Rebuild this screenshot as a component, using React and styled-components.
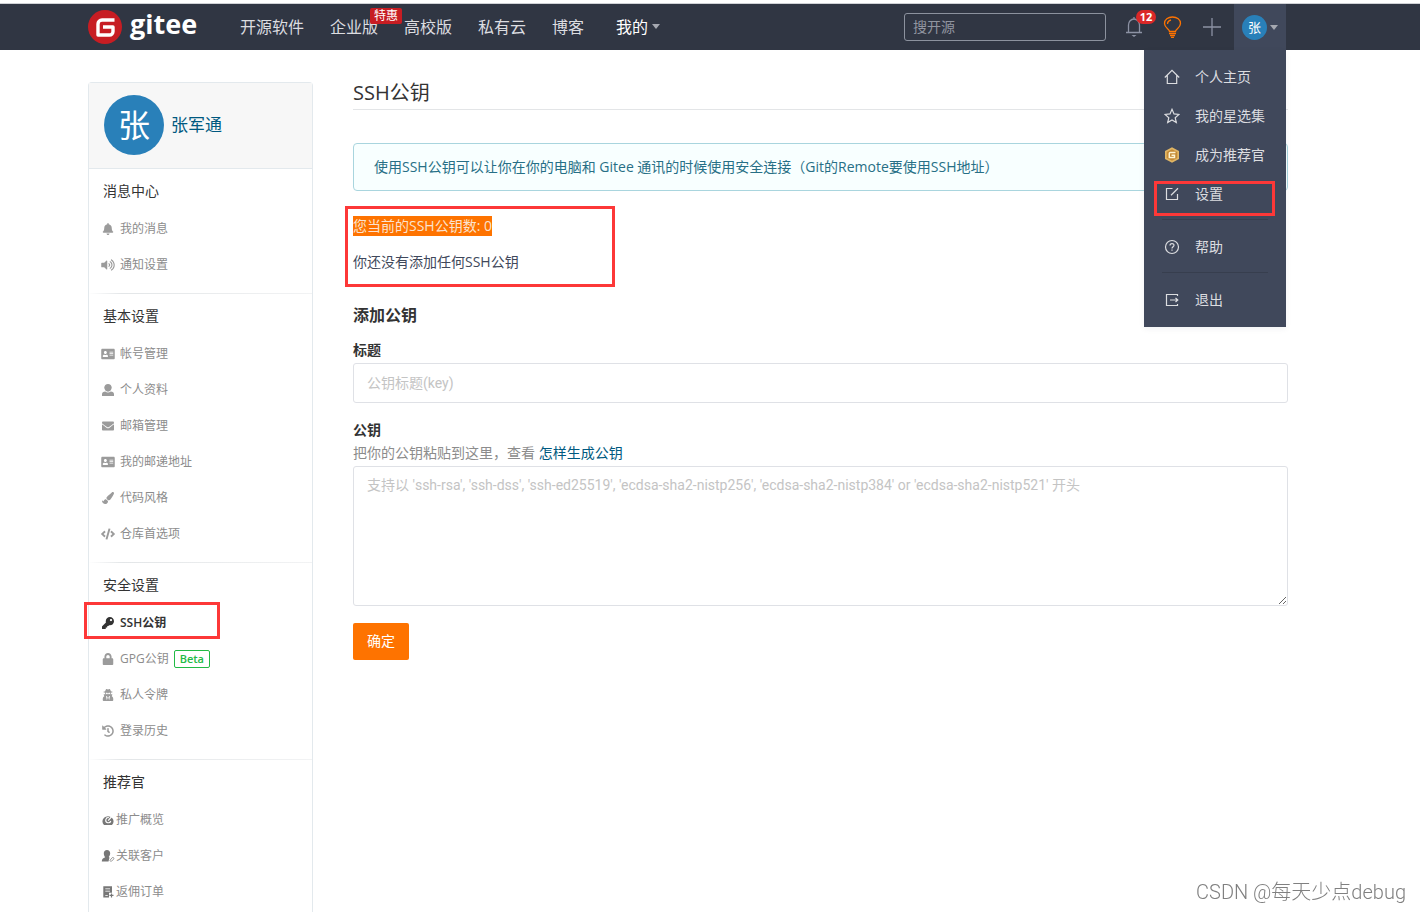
import { useState } from 'react';
import styled, { createGlobalStyle, css } from 'styled-components';
import {
  FaAddressCard,
  FaBell,
  FaCode,
  FaEnvelope,
  FaHistory,
  FaKey,
  FaLock,
  FaPaintBrush,
  FaUserSecret,
  FaVolumeUp,
} from 'react-icons/fa';

const colors = {
  header: '#303643',
  menu: '#40485b',
  orange: '#fe7300',
  red: '#c71d23',
  mark: '#fd3838',
  blue: '#2980b9',
  link: '#005980',
  text: '#333333',
  body: '#40485b',
  muted: '#8c8c8c',
  border: '#e3e9ed',
};

const GlobalStyle = createGlobalStyle`
  *, *::before, *::after {
    box-sizing: border-box;
  }
  body {
    margin: 0;
    background: #fff;
    color: ${colors.body};
    font-family: 'Open Sans', 'Noto Sans CJK SC', sans-serif;
    font-size: 14px;
    line-height: 20px;
  }
  a {
    color: inherit;
    text-decoration: none;
  }
  button, input, textarea {
    font: inherit;
  }
`;

const Page = styled.div`
  min-height: 100vh;
  display: flex;
  flex-direction: column;
`;

/* header */
const Header = styled.header`
  height: 50px;
  padding: 0 134px 0 88px;
  display: flex;
  align-items: stretch;
  background: ${colors.header};
  border-top: 3px solid #fff;
  box-shadow: inset 0 1px 0 #d0d2d6;
`;

const Logo = styled.a`
  width: 126px;
  display: flex;
  align-items: center;
  gap: 8px;
  color: #fff;
  font-size: 27px;
  font-weight: 700;
  line-height: 40px;
  & span {
    padding-bottom: 6px;
  }
`;

const Nav = styled.nav`
  display: flex;
  align-items: center;
  gap: 26px;
  padding-left: 26px;
  color: #dcdde0;
  font-size: 16px;
  white-space: nowrap;
`;

const NavLink = styled.a`
  position: relative;
`;

const NavTag = styled.span`
  position: absolute;
  left: 40px;
  top: -9px;
  padding: 0 4px;
  border-radius: 2px;
  background: ${colors.red};
  color: #fff;
  font-size: 12px;
  line-height: 16px;
`;

const NavButton = styled.button`
  display: flex;
  align-items: center;
  gap: 4px;
  margin-left: 6px;
  padding: 0;
  border: 0;
  background: none;
  color: #fff;
`;

const Caret = styled.i`
  border: 4px solid transparent;
  border-top: 5px solid #a5a8b0;
  border-bottom: 0;
`;

const Tools = styled.div`
  margin-left: auto;
  display: flex;
  align-items: center;
`;

const Search = styled.input`
  width: 202px;
  height: 28px;
  margin-right: 10px;
  padding: 0 8px;
  border: 1px solid #8c929e;
  border-radius: 3px;
  background: transparent;
  color: #fff;
  &::placeholder {
    color: #9095a0;
    opacity: 1;
  }
`;

const ToolButton = styled.button`
  position: relative;
  width: 39px;
  padding: 0 4px 0 0;
  display: flex;
  justify-content: center;
  border: 0;
  background: none;
  color: ${p => (p.$active ? colors.orange : '#8c92a4')};
`;

const Count = styled.span`
  position: absolute;
  left: 20px;
  top: -6px;
  width: 20px;
  border-radius: 7px;
  background: #db2828;
  color: #fff;
  font-size: 11px;
  font-weight: 700;
  line-height: 14px;
`;

const Account = styled.div`
  position: relative;
  align-self: stretch;
  margin-top: 1px;
  margin-left: 1px;
`;

const AccountButton = styled.button`
  width: 52px;
  height: 100%;
  padding: 0;
  display: flex;
  align-items: center;
  justify-content: center;
  gap: 3px;
  border: 0;
  background: ${colors.menu};
`;

const Avatar = styled.span`
  width: ${p => p.$size}px;
  height: ${p => p.$size}px;
  display: flex;
  align-items: center;
  justify-content: center;
  border-radius: 50%;
  background: ${colors.blue};
  color: #fff;
  font-size: ${p => (p.$size > 30 ? 32 : 13)}px;
`;

const Menu = styled.ul`
  position: absolute;
  top: 100%;
  right: 0;
  z-index: 2;
  width: 142px;
  margin: 0;
  padding: 7px 0 8px;
  list-style: none;
  background: ${colors.menu};
  color: #dcdde0;
  box-shadow: 0 2px 6px rgba(0, 40, 60, 0.06);
`;

const MenuLink = styled.a`
  height: 39px;
  padding: 0 20px;
  display: flex;
  align-items: center;
  gap: 15px;
  white-space: nowrap;
  & svg {
    flex: none;
  }
`;

const MenuRule = styled.li`
  height: 1px;
  margin: 6px 18px 7px;
  background: #373e4e;
`;

const marked = css`
  position: relative;
  &::after {
    content: '';
    position: absolute;
    border: 3px solid ${colors.mark};
    pointer-events: none;
  }
`;

const MarkedMenuItem = styled.li`
  ${marked}
  &::after {
    inset: 7px 11px -3px 10px;
  }
`;

/* layout */
const Container = styled.div`
  flex: 1;
  padding: 32px 132px 0 88px;
  display: flex;
  gap: 40px;
`;

const Sidebar = styled.aside`
  width: 225px;
  flex: none;
  border: 1px solid ${colors.border};
  border-bottom: 0;
  border-radius: 4px 4px 0 0;
`;

const Profile = styled.div`
  height: 86px;
  padding: 0 15px 2px;
  display: flex;
  align-items: center;
  gap: 7px;
  border-bottom: 1px solid ${colors.border};
  background: #f7f7f7;
  color: ${colors.link};
  font-size: 17px;
`;

const Section = styled.section`
  padding-bottom: 10px;
  & + & {
    border-top: 1px solid;
    border-image: linear-gradient(to right, #fff, #e3e6e8 15%, #f2f3f4) 1;
  }
`;

const SectionTitle = styled.h2`
  margin: 0;
  padding: 12px 14px 10px;
  color: ${colors.text};
  font-size: 14px;
  font-weight: 400;
  line-height: 20px;
`;

const List = styled.ul`
  margin: 0;
  padding: 0;
  list-style: none;
`;

const SideItem = styled.li`
  ${p => p.$marked && marked}
  &::after {
    inset: -3px 92px 2px -5px;
  }
`;

const SideLink = styled.a`
  height: 36px;
  padding-left: 12px;
  display: flex;
  align-items: center;
  gap: ${p => (p.$tight ? 1 : 5)}px;
  color: ${p => (p.$active ? colors.text : colors.muted)};
  font-size: 12px;
  font-weight: ${p => (p.$active ? 600 : 400)};
  & svg {
    width: 14px;
    flex: none;
    color: ${p => (p.$active ? colors.text : p.$tight ? '#777' : '#9b9b9b')};
  }
`;

const Beta = styled.span`
  padding: 0 5px;
  border: 1px solid #21ba45;
  border-radius: 2px;
  color: #21ba45;
  font-size: 11px;
  font-weight: 600;
  line-height: 16px;
`;

const Main = styled.main`
  flex: 1;
  min-width: 0;
`;

const Title = styled.h1`
  margin: 0 0 33px;
  padding-bottom: 5px;
  border-bottom: 1px solid #e3e5e7;
  color: ${colors.text};
  font-size: 20px;
  font-weight: 400;
  line-height: 22px;
`;

const Notice = styled.p`
  margin: 0 0 15px;
  padding: 13px 20px;
  border: 1px solid #a9d5de;
  border-radius: 4px;
  background: #f8ffff;
  color: #276f86;
`;

const KeyStatus = styled.div`
  ${marked}
  padding-top: 10px;
  &::after {
    inset: 0 auto -15px -8px;
    width: 270px;
  }
  & p {
    margin: 0 0 16px;
  }
  & p + p {
    margin: 0;
  }
`;

const Selected = styled.span`
  display: inline-block;
  background: ${colors.orange};
  color: #fbe3cf;
`;

const FormTitle = styled.h2`
  margin: 33px 0 15px;
  color: ${colors.text};
  font-size: 16px;
  font-weight: 600;
  line-height: 20px;
`;

const Label = styled.label`
  display: block;
  color: ${colors.text};
  font-weight: 600;
`;

const Hint = styled.p`
  margin: 3px 0;
  color: #8c8c8c;
  & a {
    color: ${colors.link};
  }
`;

const fieldStyle = css`
  display: block;
  width: 100%;
  border: 1px solid #dfe1e6;
  border-radius: 3px;
  background: #fff;
  color: ${colors.text};
  font-family: Roboto, 'Noto Sans CJK SC', sans-serif;
  &::placeholder {
    color: #c4c4c4;
    opacity: 1;
  }
`;

const TextInput = styled.input`
  ${fieldStyle}
  height: 40px;
  margin: 3px 0 17px;
  padding: 0 13px;
`;

const TextArea = styled.textarea`
  ${fieldStyle}
  height: 140px;
  margin-bottom: 17px;
  padding: 8px 13px;
`;

const Submit = styled.button`
  padding: 8px 14px 9px;
  border: 0;
  border-radius: 2px;
  background: ${colors.orange};
  color: #fff;
`;

const Watermark = styled.div`
  position: fixed;
  right: 14px;
  bottom: 8px;
  color: #808080;
  font-family: Roboto, 'Noto Sans CJK SC', sans-serif;
  font-size: 20px;
  font-weight: 300;
  line-height: 24px;
`;

/* icons */
const Line = ({ size = 16, width = 1.2, children }) => (
  <svg
    width={size}
    height={size}
    viewBox="0 0 16 16"
    fill="none"
    stroke="currentColor"
    strokeWidth={width}
    aria-hidden="true"
  >
    {children}
  </svg>
);

const LogoMark = () => (
  <svg width="34" height="34" viewBox="0 0 34 34" aria-hidden="true">
    <circle cx="17" cy="17" r="17" fill={colors.red} />
    <path
      d="M26.500 10H14a4 4 0 0 0-4 4v11h11.500a3.500 3.500 0 0 0 3.500-3.500V17H15"
      fill="none"
      stroke="#fff"
      strokeWidth="3.400"
      strokeLinejoin="round"
    />
  </svg>
);

const BellIcon = () => (
  <svg width="18" height="22" viewBox="0 0 18 22" fill="none" stroke="currentColor" aria-hidden="true">
    <path d="M1 16.500h16M3.500 16V9a5.500 6 0 0 1 11 0v7M9 1v2" strokeWidth="1.300" />
    <path d="M6.500 19h5L9 21z" fill="currentColor" stroke="none" />
  </svg>
);

const BulbIcon = () => (
  <svg width="19" height="22" viewBox="0 0 19 22" fill="none" stroke="currentColor" aria-hidden="true">
    <path
      d="M6.500 15.500C6.500 13 1.500 12 1.500 7.500 1.500 3.500 5 1 9.500 1s8 2.500 8 6.500c0 4.500-5 5.500-5 8z"
      strokeWidth="1.300"
    />
    <path d="M4.500 8c0-2 1.500-3.500 3.500-4M6 17.500h7M7 19.500h5M8 21.300h3" strokeWidth="1.300" />
  </svg>
);

const PlusIcon = () => (
  <svg width="18" height="18" viewBox="0 0 18 18" stroke="currentColor" aria-hidden="true">
    <path d="M9 0v18M0 9h18" strokeWidth="1.300" />
  </svg>
);

const HomeIcon = () => (
  <Line>
    <path d="M.8 8.500 8 1.300l7.200 7.200M3.300 6.500v8h9.400v-8" />
  </Line>
);

const StarIcon = () => (
  <Line>
    <path d="m8 1.300 2 4.600 5 .5-3.800 3.300 1.100 4.900L8 12l-4.300 2.600 1.100-4.900L1 6.400l5-.5z" />
  </Line>
);

const MedalIcon = () => (
  <svg width="16" height="16" viewBox="0 0 16 16" aria-hidden="true">
    <path d="M8 .3 15 4v8l-7 3.700L1 12V4z" fill="#e0b565" />
    <path d="M8 2.300 13.300 5v6L8 13.700 2.700 11V5z" fill="#c58a35" />
    <path
      d="M11.500 5.500H6.300c-.6 0-1 .4-1 1v4h5.200V8.300h-3"
      fill="none"
      stroke="#fff3d0"
      strokeWidth="1.500"
    />
  </svg>
);

const EditIcon = () => (
  <Line>
    <path d="M8.500 2.500h-6v11h11V8M7 9.200 14 2.300" />
  </Line>
);

const HelpIcon = () => (
  <Line>
    <circle cx="8" cy="8" r="6.500" />
    <path d="M6 6.600c0-2.700 4-2.600 4-.3C10 7.700 8 7.800 8 9.500M8 10.500v1.300" />
  </Line>
);

const ExitIcon = () => (
  <Line>
    <path d="M13.500 4V2.500h-11v11h11V12M6 8h8M11.500 6l2.300 2-2.300 2" />
  </Line>
);

const UserIcon = () => (
  <svg width="14" height="12" viewBox="0 0 14 12" fill="currentColor" aria-hidden="true">
    <path d="M7 0c2.200 0 3.700 1.500 3.700 3.600C10.700 5.800 9 7.800 7 7.800S3.300 5.800 3.300 3.600C3.300 1.500 4.800 0 7 0z" />
    <path d="M1 12v-1.800C1 8.600 2.300 8 4.300 7.600c1.600 1.300 3.800 1.300 5.400 0 2 .4 3.300 1 3.300 2.600V12z" />
  </svg>
);

const GaugeIcon = () => (
  <svg width="14" height="12" viewBox="0 0 14 12" fill="none" aria-hidden="true">
    <path d="M3 11a5.600 5.200 0 1 1 8 0z" fill="currentColor" />
    <path d="M7.800 3.600a2.600 2.600 0 1 0 2 3.400" stroke="#fff" strokeWidth="1.100" />
    <path d="m7.200 6.600 4-4.600" stroke="#fff" strokeWidth="1.200" />
  </svg>
);

const ClientIcon = () => (
  <svg width="14" height="12" viewBox="0 0 14 12" fill="currentColor" aria-hidden="true">
    <path d="M6 0c2 0 3.200 1.300 3.200 3.200 0 1.600-.7 2.800-1.400 3.600l.7 1L7.500 11.500H.8C.8 9 2 8.200 4.200 7.200 3.400 6.200 2.800 4.800 2.800 3.200 2.800 1.300 4 0 6 0z" />
    <path
      d="m9.200 10 2-2.300c.8-.8 2.300.3 1.500 1.300l-1.900 2c-.9.900-2.300-.1-1.600-1z"
      fill="none"
      stroke="currentColor"
      strokeWidth=".7"
    />
  </svg>
);

const OrderIcon = () => (
  <svg width="14" height="12" viewBox="0 0 14 12" aria-hidden="true">
    <path d="M2.300.3H11v6.500H8v4.700H2.300z" fill="currentColor" />
    <path d="M4.300 2.800H9M4.300 5.200H9M4.300 9.500h2.500" stroke="#fff" strokeWidth=".8" />
    <path d="M8.500 9.300h4M10.500 7.500v4" stroke="currentColor" strokeWidth="1.200" />
  </svg>
);

const sections = [
  {
    title: '消息中心',
    items: [
      { label: '我的消息', Icon: FaBell },
      { label: '通知设置', Icon: FaVolumeUp },
    ],
  },
  {
    title: '基本设置',
    items: [
      { label: '帐号管理', Icon: FaAddressCard },
      { label: '个人资料', Icon: UserIcon },
      { label: '邮箱管理', Icon: FaEnvelope },
      { label: '我的邮递地址', Icon: FaAddressCard },
      { label: '代码风格', Icon: FaPaintBrush },
      { label: '仓库首选项', Icon: FaCode },
    ],
  },
  {
    title: '安全设置',
    items: [
      { label: 'SSH公钥', Icon: FaKey, active: true },
      { label: 'GPG公钥', Icon: FaLock, beta: true },
      { label: '私人令牌', Icon: FaUserSecret },
      { label: '登录历史', Icon: FaHistory },
    ],
  },
  {
    title: '推荐官',
    tight: true,
    items: [
      { label: '推广概览', Icon: GaugeIcon },
      { label: '关联客户', Icon: ClientIcon },
      { label: '返佣订单', Icon: OrderIcon },
    ],
  },
];

function AccountMenu() {
  const [open, setOpen] = useState(true);

  return (
    <Account>
      <AccountButton type="button" aria-label="张军通" aria-expanded={open} onClick={() => setOpen(!open)}>
        <Avatar $size={25}>张</Avatar>
        <Caret />
      </AccountButton>
      {open && (
        <Menu>
          <li>
            <MenuLink href="#home"><HomeIcon />个人主页</MenuLink>
          </li>
          <li>
            <MenuLink href="#stars"><StarIcon />我的星选集</MenuLink>
          </li>
          <li>
            <MenuLink href="#referrer"><MedalIcon />成为推荐官</MenuLink>
          </li>
          <MarkedMenuItem>
            <MenuLink href="#settings"><EditIcon />设置</MenuLink>
          </MarkedMenuItem>
          <MenuRule />
          <li>
            <MenuLink href="#help"><HelpIcon />帮助</MenuLink>
          </li>
          <MenuRule />
          <li>
            <MenuLink href="#logout"><ExitIcon />退出</MenuLink>
          </li>
        </Menu>
      )}
    </Account>
  );
}

function TopBar() {
  return (
    <Header>
      <Logo href="#gitee">
        <LogoMark />
        <span>gitee</span>
      </Logo>
      <Nav>
        <NavLink href="#explore">开源软件</NavLink>
        <NavLink href="#enterprise">
          企业版
          <NavTag>特惠</NavTag>
        </NavLink>
        <NavLink href="#education">高校版</NavLink>
        <NavLink href="#cloud">私有云</NavLink>
        <NavLink href="#blog">博客</NavLink>
        <NavButton type="button">
          我的
          <Caret />
        </NavButton>
      </Nav>
      <Tools>
        <Search type="text" placeholder="搜开源" aria-label="搜开源" />
        <ToolButton type="button" aria-label="通知">
          <BellIcon />
          <Count>12</Count>
        </ToolButton>
        <ToolButton type="button" aria-label="动态" $active>
          <BulbIcon />
        </ToolButton>
        <ToolButton type="button" aria-label="新建">
          <PlusIcon />
        </ToolButton>
        <AccountMenu />
      </Tools>
    </Header>
  );
}

function SideMenu() {
  return (
    <Sidebar>
      <Profile>
        <Avatar $size={60}>张</Avatar>
        <a href="#profile">张军通</a>
      </Profile>
      {sections.map(({ title, tight, items }) => (
        <Section key={title}>
          <SectionTitle>{title}</SectionTitle>
          <List>
            {items.map(({ label, Icon, active, beta }) => (
              <SideItem key={label} $marked={active}>
                <SideLink href={`#${label}`} $active={active} $tight={tight}>
                  <Icon size={12} />
                  {label}
                  {beta && <Beta>Beta</Beta>}
                </SideLink>
              </SideItem>
            ))}
          </List>
        </Section>
      ))}
    </Sidebar>
  );
}

export default function App() {
  return (
    <Page>
      <GlobalStyle />
      <TopBar />
      <Container>
        <SideMenu />
        <Main>
          <Title>SSH公钥</Title>
          <Notice>使用SSH公钥可以让你在你的电脑和 Gitee 通讯的时候使用安全连接（Git的Remote要使用SSH地址）</Notice>
          <KeyStatus>
            <p>
              <Selected>您当前的SSH公钥数: 0</Selected>
            </p>
            <p>你还没有添加任何SSH公钥</p>
          </KeyStatus>
          <form onSubmit={e => e.preventDefault()}>
            <FormTitle>添加公钥</FormTitle>
            <Label htmlFor="key-title">标题</Label>
            <TextInput id="key-title" type="text" placeholder="公钥标题(key)" />
            <Label htmlFor="key-body">公钥</Label>
            <Hint>
              把你的公钥粘贴到这里，查看 <a href="#generate">怎样生成公钥</a>
            </Hint>
            <TextArea
              id="key-body"
              placeholder="支持以 'ssh-rsa', 'ssh-dss', 'ssh-ed25519', 'ecdsa-sha2-nistp256', 'ecdsa-sha2-nistp384' or 'ecdsa-sha2-nistp521' 开头"
            />
            <Submit type="submit">确定</Submit>
          </form>
        </Main>
      </Container>
      <Watermark>CSDN @每天少点debug</Watermark>
    </Page>
  );
}
